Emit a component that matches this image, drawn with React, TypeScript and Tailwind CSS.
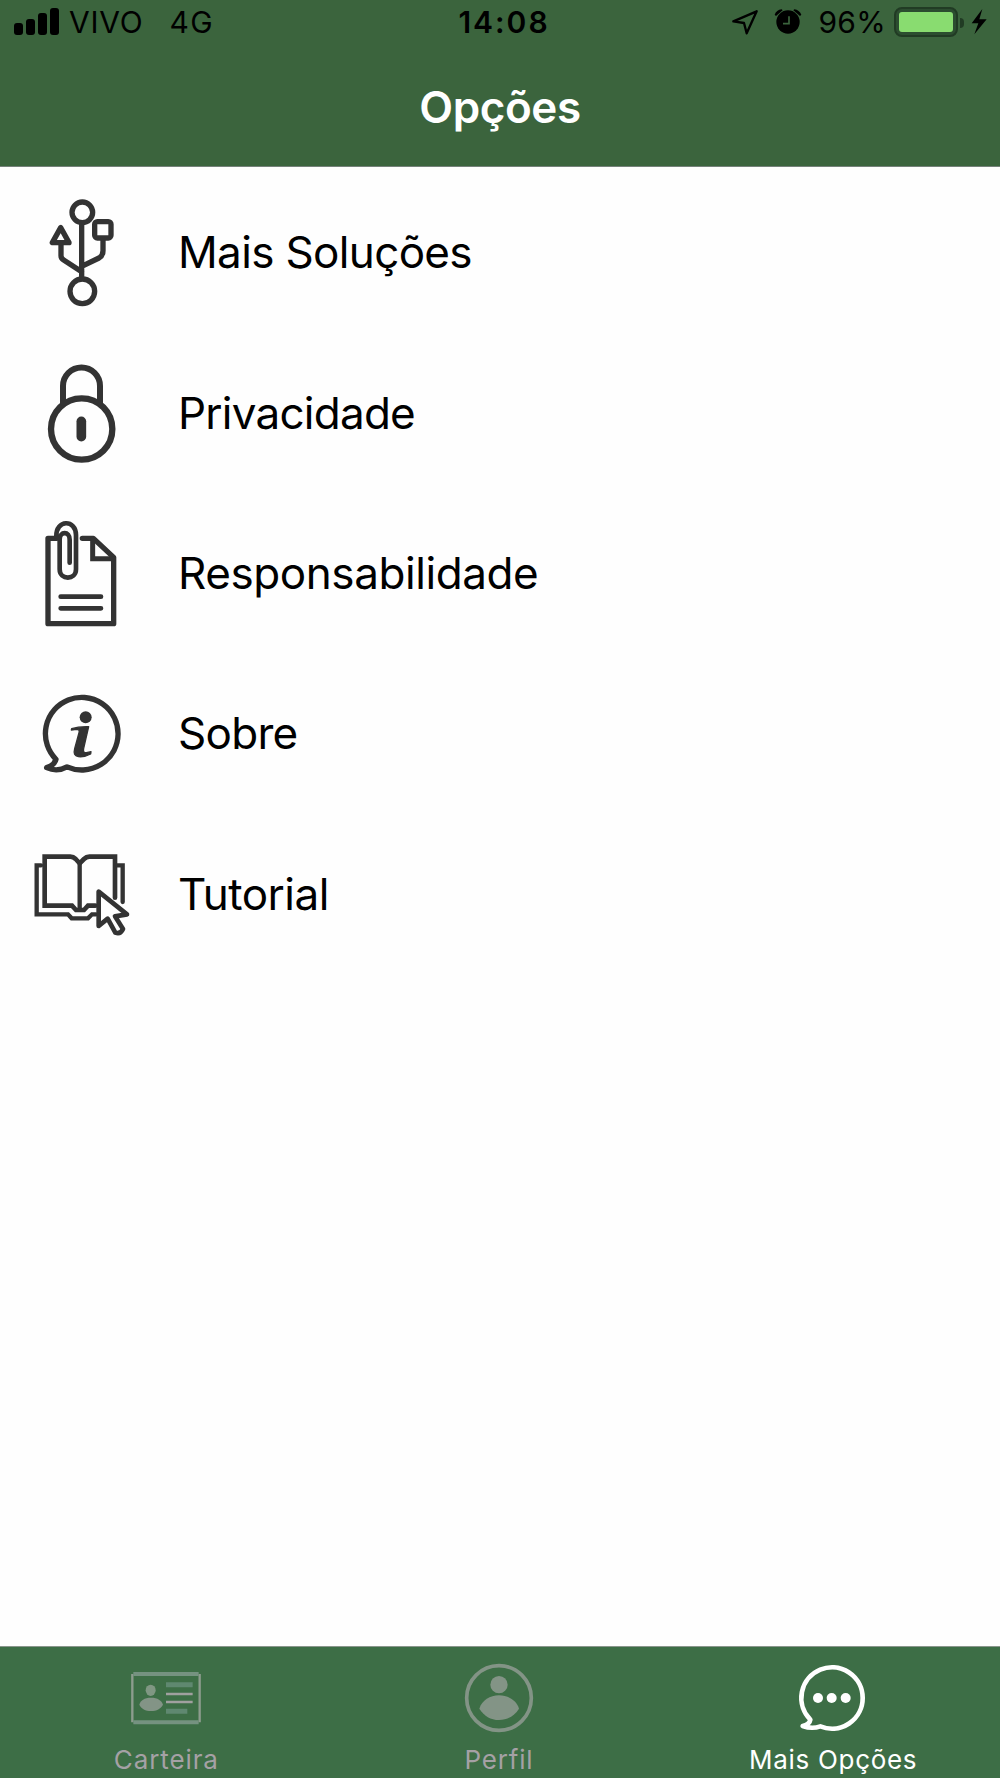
import type { ReactNode } from "react";
import clsx from "clsx";

type Option = {
  label: string;
  labelClass: string;
  viewBox: string;
  icon: ReactNode;
};

const options: Option[] = [
  {
    label: "Mais Soluções",
    labelClass: "tracking-[-0.65px]",
    viewBox: "0 6 360 420",
    icon: (
      <>
        <circle cx="187" cy="97" r="31" />
        <circle cx="187" cy="334" r="37" />
        <path d="M185 130V296M123 189v38q0 8 8 13l54 35M249 176v36q0 15-12 22l-52 25" />
        <path d="M122 143l-25 45h50z" />
        <rect x="224" y="125" width="49" height="49" rx="8" />
      </>
    ),
  },
  {
    label: "Privacidade",
    labelClass: "tracking-[-0.75px]",
    viewBox: "0 -7 360 420",
    icon: (
      <>
        <circle cx="185" cy="251" r="92" strokeWidth="19" />
        <path d="M129 172v-50a55 55 0 0 1 111 0v50" strokeWidth="18" />
        <path d="M184 228v46" strokeWidth="29" />
      </>
    ),
  },
  {
    label: "Responsabilidade",
    labelClass: "tracking-[-0.42px]",
    viewBox: "0 -6 360 420",
    icon: (
      <>
        <path d="M110 100H84V356H281V157L220 100H187" strokeWidth="16" />
        <path d="M218 103v58h61" strokeWidth="15" strokeLinejoin="miter" />
        <path d="M109 94c-2-51 59-52 59-4v103c0 33-49 33-49 0V104c0-26 30-26 30 0v69" strokeWidth="14" />
        <path d="M122 275h121M122 310h121" strokeWidth="14" />
      </>
    ),
  },
  {
    label: "Sobre",
    labelClass: "tracking-[-0.7px]",
    viewBox: "0 -51 360 420",
    icon: (
      <>
        <path d="M108 238A109 109 0 1 1 141 260.7Q111 277 80 263Q103 256 108 238z" />
        <circle cx="197" cy="112" r="18" fill="#333" stroke="none" />
        <path
          d="M155 146q21-7 51-6l-15 65q-3 14 8 13l14-3-1 7q-18 10-37 8-17-2-11-24l13-48q3-10-8-10l-15 2z"
          fill="#333"
          stroke="#333"
          strokeWidth="4"
        />
      </>
    ),
  },
  {
    label: "Tutorial",
    labelClass: "tracking-[-0.5px]",
    viewBox: "0 -34 360 420",
    icon: (
      <>
        <path
          d="M226 211h-22l-12 13h-24l-12-13H74V64h77q9 0 16 7l12 13 13-13q7-7 16-7h77v123"
          strokeLinejoin="miter"
          strokeWidth="14"
        />
        <path d="M179 84v138M63 90H50v147h94l11 12h49l12-12h12M292 90h16v110" strokeLinejoin="miter" strokeWidth="13" />
        <path d="M236 169v103l27-22 23 42q15 6 23-11l-24-38 36-6z" strokeWidth="14" />
      </>
    ),
  },
];

type Tab = {
  label: string;
  labelClass: string;
  viewBox: string;
  active?: boolean;
  icon: ReactNode;
};

const tabs: Tab[] = [
  {
    label: "Carteira",
    labelClass: "tracking-[0.9px]",
    viewBox: "107 60 240 240",
    icon: (
      <>
        <path d="M126 117v145M328 117v145" stroke="#8d9c8e" strokeWidth="7" />
        <path d="M129 117h196M129 262h196" stroke="#759280" strokeWidth="12" />
        <ellipse cx="181" cy="166" rx="15" ry="17" fill="#809783" />
        <path d="M147 209c3-13 15-21 35-21s32 8 36 21c-7 12-19 19-36 19s-29-7-35-19z" fill="#839486" />
        <path d="M227 149h80M227 229h64" stroke="#5f8870" strokeWidth="15" />
        <path d="M227 177h80M227 201h80" stroke="#a0a09f" strokeWidth="7" />
      </>
    ),
  },
  {
    label: "Perfil",
    labelClass: "tracking-[0.8px]",
    viewBox: "85 60 240 240",
    icon: (
      <>
        <circle cx="205" cy="189" r="97" stroke="#839486" strokeWidth="11" />
        <circle cx="205" cy="149" r="26" fill="#839486" />
        <path d="M146 221c8-25 32-40 59-40s52 15 60 40c-14 22-35 34-60 34s-45-12-59-34z" fill="#839486" />
      </>
    ),
  },
  {
    label: "Mais Opções",
    labelClass: "pl-[3px] tracking-[0.7px]",
    viewBox: "188 60 240 240",
    active: true,
    icon: (
      <>
        <path d="M243 254A92 92 0 1 1 273 274Q248 283 220 273Q241 268 243 254z" stroke="#fff" strokeWidth="14" />
        <circle cx="266" cy="189" r="15" fill="#fff" />
        <circle cx="307" cy="189" r="15" fill="#fff" />
        <circle cx="349" cy="189" r="15" fill="#fff" />
      </>
    ),
  },
];

function StatusBar() {
  return (
    <div className="flex h-[46px] items-start pt-[3px] text-[30px] leading-[40px] text-black">
      <div className="flex flex-1 items-start pl-[14px]">
        <div className="mt-[5px] flex h-[27px] items-end gap-[3px]">
          <span className="h-[12px] w-[9px] rounded-[3px] bg-black" />
          <span className="h-[16px] w-[9px] rounded-[3px] bg-black" />
          <span className="h-[22px] w-[9px] rounded-[3px] bg-black" />
          <span className="h-[27px] w-[9px] rounded-[3px] bg-black" />
        </div>
        <span className="-mt-px ml-[10px] tracking-[0.8px]">VIVO</span>
        <span className="-mt-px ml-[26px] tracking-[1.2px]">4G</span>
      </div>
      <span className="-mt-px ml-[6px] font-semibold tracking-[2px]">14:08</span>
      <div className="flex flex-1 items-start justify-end pr-[12px]">
        <svg className="mt-[6px] h-[27px] w-[27px]" viewBox="95 28 81 81" fill="none">
          <path d="M99 65l70-30-30 66-8-31z" stroke="#000" strokeWidth="7" strokeLinejoin="round" />
        </svg>
        <svg className="mt-[5px] ml-[15px] h-[28px] w-[28px]" viewBox="222 24 84 84">
          <circle cx="264" cy="66" r="35" />
          <path d="M224 44q5-14 21-16l3 3-20 17zM304 44q-6-14-21-16l-3 3 20 17z" />
          <path d="M267 49v22h-18" fill="none" stroke="#3b643d" strokeWidth="5" />
        </svg>
        <span className="-mt-px ml-[16px] tracking-[0.3px]">96%</span>
        <span className="mt-[4px] ml-[8px] flex h-[30px] w-[64px] rounded-[8px] border-2 border-[#213b24] bg-[#2c4d30] p-[3px]">
          <span className="flex-1 rounded-[3px] bg-[#89dc70]" />
        </span>
        <span className="mt-[15px] ml-[2px] h-[10px] w-[4px] rounded-r-full bg-[#213b24]" />
        <svg className="mt-[5px] ml-[7px] h-[27px] w-[17px]" viewBox="816 24 51 81">
          <path d="M850 27l-32 43h20l-12 33 37-45h-22z" />
        </svg>
      </div>
    </div>
  );
}

function OptionRow({ option }: { option: Option }) {
  return (
    <li className="flex h-[160.4px] items-center pl-[20px]">
      <svg
        className="h-[140px] w-[120px] shrink-0"
        viewBox={option.viewBox}
        fill="none"
        stroke="#333"
        strokeWidth="16"
        strokeLinecap="round"
        strokeLinejoin="round"
      >
        {option.icon}
      </svg>
      <span className={clsx("ml-[38px] text-[44px] leading-[54px] text-black", option.labelClass)}>
        {option.label}
      </span>
    </li>
  );
}

export default function App() {
  return (
    <div className="flex h-[1778px] w-[1000px] flex-col bg-[#fefefe] font-['Inter',sans-serif]">
      <header className="h-[167px] border-b border-[#75817a] bg-[#3b643d]">
        <StatusBar />
        <h1 className="pt-[34px] text-center text-[44px] leading-[54px] font-semibold tracking-[-0.4px] text-white">
          Opções
        </h1>
      </header>

      <ul className="flex-1 pt-[5px]">
        {options.map((option) => (
          <OptionRow key={option.label} option={option} />
        ))}
      </ul>

      <nav className="flex h-[132px] border-t border-[#8a958c] bg-[#3d6e46] pr-[2px]">
        {tabs.map((tab) => (
          <button key={tab.label} className="flex flex-1 flex-col items-center pt-[8px]">
            <svg className="h-[80px] w-[80px]" viewBox={tab.viewBox} fill="none" strokeLinejoin="round">
              {tab.icon}
            </svg>
            <span
              className={clsx(
                "mt-[9px] text-[26px] leading-[32px] whitespace-nowrap",
                tab.active ? "text-white" : "text-[#a5a1a5]",
                tab.labelClass,
              )}
            >
              {tab.label}
            </span>
          </button>
        ))}
      </nav>
    </div>
  );
}
